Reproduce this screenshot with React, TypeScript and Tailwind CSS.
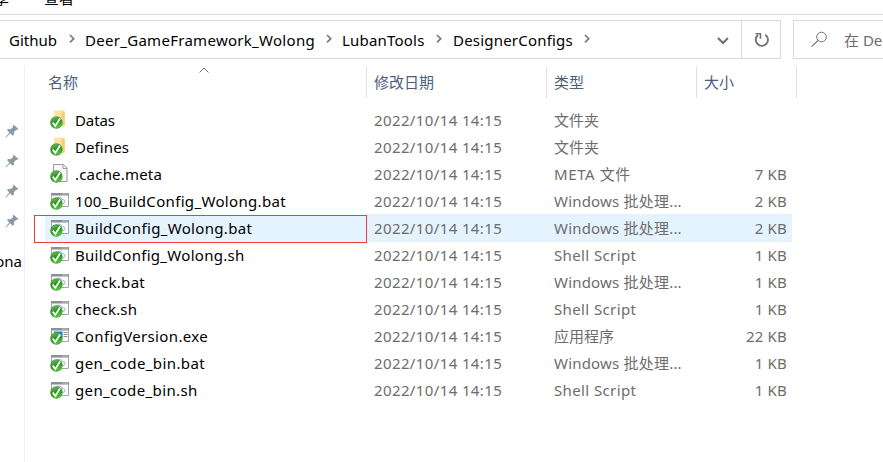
import React from "react";

type Kind = "folder" | "file" | "script" | "exe";

interface Entry {
  kind: Kind;
  name: string;
  type: string;
  size?: string;
  spacing: string;
  typeSpacing: string;
}

const entries: Entry[] = [
  { kind: "folder", name: "Datas", type: "文件夹", spacing: "tracking-[-0.1px]", typeSpacing: "" },
  { kind: "folder", name: "Defines", type: "文件夹", spacing: "tracking-[0.1px]", typeSpacing: "" },
  { kind: "file", name: ".cache.meta", type: "META 文件", size: "7 KB", spacing: "tracking-[0.2px]", typeSpacing: "tracking-[0.6px]" },
  { kind: "script", name: "100_BuildConfig_Wolong.bat", type: "Windows 批处理...", size: "2 KB", spacing: "tracking-[0.33px]", typeSpacing: "tracking-[0.2px]" },
  { kind: "script", name: "BuildConfig_Wolong.bat", type: "Windows 批处理...", size: "2 KB", spacing: "tracking-[0.33px]", typeSpacing: "tracking-[0.2px]" },
  { kind: "script", name: "BuildConfig_Wolong.sh", type: "Shell Script", size: "1 KB", spacing: "tracking-[0.3px]", typeSpacing: "tracking-[0.38px]" },
  { kind: "script", name: "check.bat", type: "Windows 批处理...", size: "1 KB", spacing: "tracking-[0.32px]", typeSpacing: "tracking-[0.2px]" },
  { kind: "script", name: "check.sh", type: "Shell Script", size: "1 KB", spacing: "tracking-[0.2px]", typeSpacing: "tracking-[0.38px]" },
  { kind: "exe", name: "ConfigVersion.exe", type: "应用程序", size: "22 KB", spacing: "tracking-[0.35px]", typeSpacing: "" },
  { kind: "script", name: "gen_code_bin.bat", type: "Windows 批处理...", size: "1 KB", spacing: "tracking-[0.4px]", typeSpacing: "tracking-[0.2px]" },
  { kind: "script", name: "gen_code_bin.sh", type: "Shell Script", size: "1 KB", spacing: "tracking-[0.37px]", typeSpacing: "tracking-[0.38px]" },
];

function FileIcon({ kind }: { kind: Kind }) {
  return (
    <svg width="20" height="20" viewBox="0 0 20 20" className="block shrink-0">
      <defs>
        <linearGradient id="badge" x1="0" y1="0" x2="0.4" y2="1">
          <stop offset="0" stopColor="#7fc070" />
          <stop offset="0.45" stopColor="#3a9a2c" />
          <stop offset="0.55" stopColor="#2a8f1c" />
          <stop offset="1" stopColor="#4cc832" />
        </linearGradient>
      </defs>
      {kind === "folder" && (
        <>
          <path d="M4 .5h10.500v15.500H4z" fill="#fcdf8f" />
          <path d="M11.500 3l3.300-1V15.500h-3.300z" fill="#f3ce78" />
          <path d="M4 1h6V14H4z" fill="#ffe6a6" />
        </>
      )}
      {kind === "file" && (
        <path d="M3.500.500h10l3.500 3.500v13.500H3.500z M13 .5v4h4" fill="#f8f8f8" stroke="#9b9b9b" />
      )}
      {(kind === "script" || kind === "exe") && (
        <>
          <path d="M1.500 2.500h17v13h-17z" fill="#fafbfc" stroke="#a3a7ab" />
          <path d="M1 2h18v2.500H1z" fill="#8b9095" />
          <path d="M12.500 2.500h1v1h-1zM14.500 2.500h1v1h-1zM16.500 2.500h1v1h-1z" fill="#f2f2f2" />
        </>
      )}
      {kind === "script" && (
        <>
          <circle cx="9" cy="9" r="3" fill="#e3e8eb" stroke="#b0bcc4" />
          <circle cx="13" cy="10.500" r="2" fill="#eaf3f8" stroke="#a6bfcd" />
        </>
      )}
      {kind === "exe" && (
        <>
          <path d="M4 5.500h8.500v7H4z" fill="#1683d8" />
          <path d="M13.500 6.500h4M13.500 8.500h4M13.500 10.500h4" stroke="#8a9299" />
        </>
      )}
      <circle cx="6.400" cy="12.500" r="6.200" fill="#4a9d3c" />
      <circle cx="6.400" cy="12.500" r="5.600" fill="url(#badge)" />
      <path d="M2.800 12.600l2.500 3.400 4.800-7.500" fill="none" stroke="#fff" strokeWidth="1.800" />
    </svg>
  );
}

function Pin() {
  return (
    <svg width="14" height="14" viewBox="0 0 14 14" className="block">
      <path d="M8.700.700l4.600 4.400-1.100.900-1-.2-2.400 2.500.1 2.400-1.200 1.100-2.500-2.500L1 13.500l-.5-.5 3.900-4.400L2 6.100l1.100-1 2.500.1L8.100 2.900l-.2-1.200z" fill="#8b98a3" />
    </svg>
  );
}

function Crumb({ label, className }: { label: string; className: string }) {
  return (
    <div className={`flex shrink-0 items-center justify-between ${className}`}>
      <span>{label}</span>
      <svg width="6" height="10" viewBox="0 0 6 10" className="-mt-px">
        <path d="M1 1l3.700 3.700L1 8.400" fill="none" stroke="#7b7b7b" strokeWidth="1.700" />
      </svg>
    </div>
  );
}

export default function App() {
  return (
    <div className="flex h-[462px] w-[883px] flex-col overflow-hidden whitespace-nowrap bg-white font-['Noto_Sans','Noto_Sans_CJK_SC',sans-serif] text-[15px] leading-[22px] text-black">
      <div className="flex h-[15px] shrink-0 items-end overflow-hidden border-b border-[#dadada] pb-[5px]">
        <span className="-ml-[6px] w-[50px]">享</span>
        <span>查看</span>
      </div>

      <div className="mt-[5px] flex h-[39px] shrink-0">
        <div className="flex w-[781px] shrink-0 border-y border-r border-[#d9d9d9]">
          <div className="flex w-[741px] items-center pl-[9px]">
            <Crumb label="Github" className="mr-[10px] w-[66px]" />
            <Crumb label="Deer_GameFramework_Wolong" className="mr-[10px] w-[247px] tracking-[0.29px]" />
            <Crumb label="LubanTools" className="mr-[11px] w-[100px] tracking-[0.2px]" />
            <Crumb label="DesignerConfigs" className="w-[137px] tracking-[0.2px]" />
            <svg width="12" height="8" viewBox="0 0 12 8" className="ml-auto mr-[12px] mt-[3px]">
              <path d="M1 1l5 5 5-5" fill="none" stroke="#6f6f6f" strokeWidth="2" />
            </svg>
          </div>
          <div className="flex flex-1 items-center justify-center border-l border-[#d9d9d9]">
            <svg width="16" height="16" viewBox="0 0 16 16" className="ml-[2px]">
              <path d="M11.300 2.700a6.100 6.100 0 1 1-7.300.3" fill="none" stroke="#737373" strokeWidth="1.900" />
              <path d="M1.500 1.800h5v5" fill="none" stroke="#737373" strokeWidth="1.600" />
            </svg>
          </div>
        </div>
        <div className="ml-[12px] flex flex-1 items-center overflow-hidden border-y border-l border-[#d9d9d9] text-[#6d6d6d]">
          <svg width="17" height="17" viewBox="0 0 17 17" className="ml-[17px] mr-[16px] shrink-0">
            <circle cx="10.500" cy="6" r="4.800" fill="none" stroke="#747474" />
            <path d="M7 9.500L.5 15.700" stroke="#747474" strokeWidth="1.100" />
          </svg>
          <span>在 Deer</span>
        </div>
      </div>

      <div className="mt-[7px] flex flex-1">
        <aside className="flex w-[25px] shrink-0 flex-col items-start overflow-hidden border-r border-[#f0f0f0] pt-[58px]">
          <div className="ml-[5px] flex flex-col gap-4">
            <Pin />
            <Pin />
            <Pin />
            <Pin />
          </div>
          <div className="mt-[22px] flex w-[22px] justify-end">ona</div>
        </aside>

        <main className="flex-1">
          <div className="flex h-[32px] items-center text-[#4c607a]">
            <div className="relative flex h-full w-[342px] items-center border-r border-[#e0e0e0] pl-[23px]">
              名称
              <svg width="10" height="6" viewBox="0 0 10 6" className="absolute left-[174px] top-px">
                <path d="M.5 5.500L5 1l4.500 4.500" fill="none" stroke="#737373" />
              </svg>
            </div>
            <div className="flex h-full w-[180px] items-center border-r border-[#e0e0e0] pl-[7px]">修改日期</div>
            <div className="flex h-full w-[150px] items-center border-r border-[#e0e0e0] pl-[7px]">类型</div>
            <div className="flex h-full w-[100px] items-center border-r border-[#e0e0e0] pl-[7px]">大小</div>
          </div>

          <div className="mt-[8px] text-[#6d6d6d]">
            {entries.map((entry, i) => {
              const selected = i === 4;
              return (
                <div key={entry.name} className="flex h-[27px] items-start pl-[9px]">
                  <div
                    className={
                      selected
                        ? "mt-px h-[28px] w-[333px] border border-[#f23b3f] pl-[10px] text-black"
                        : "h-[27px] w-[333px] pl-[11px] text-black"
                    }
                  >
                    <div
                      className={
                        selected
                          ? "flex h-full items-center gap-[5px] bg-[#e5f3ff] pb-[3px] pl-[5px]"
                          : "flex h-full items-center gap-[5px] pl-[5px]"
                      }
                    >
                      <FileIcon kind={entry.kind} />
                      <span className={entry.spacing}>{entry.name}</span>
                    </div>
                  </div>
                  <div
                    className={
                      selected
                        ? "flex h-[28px] w-[425px] items-center bg-[#e5f3ff] pb-px"
                        : "flex h-[27px] w-[425px] items-center"
                    }
                  >
                    <span className="w-[180px] pl-[7px] tracking-[0.38px]">2022/10/14 14:15</span>
                    <span className={`w-[150px] pl-[7px] ${entry.typeSpacing}`}>{entry.type}</span>
                    <span className="w-[90px] text-right tracking-[0.2px]">{entry.size}</span>
                  </div>
                </div>
              );
            })}
          </div>
        </main>
      </div>
    </div>
  );
}
